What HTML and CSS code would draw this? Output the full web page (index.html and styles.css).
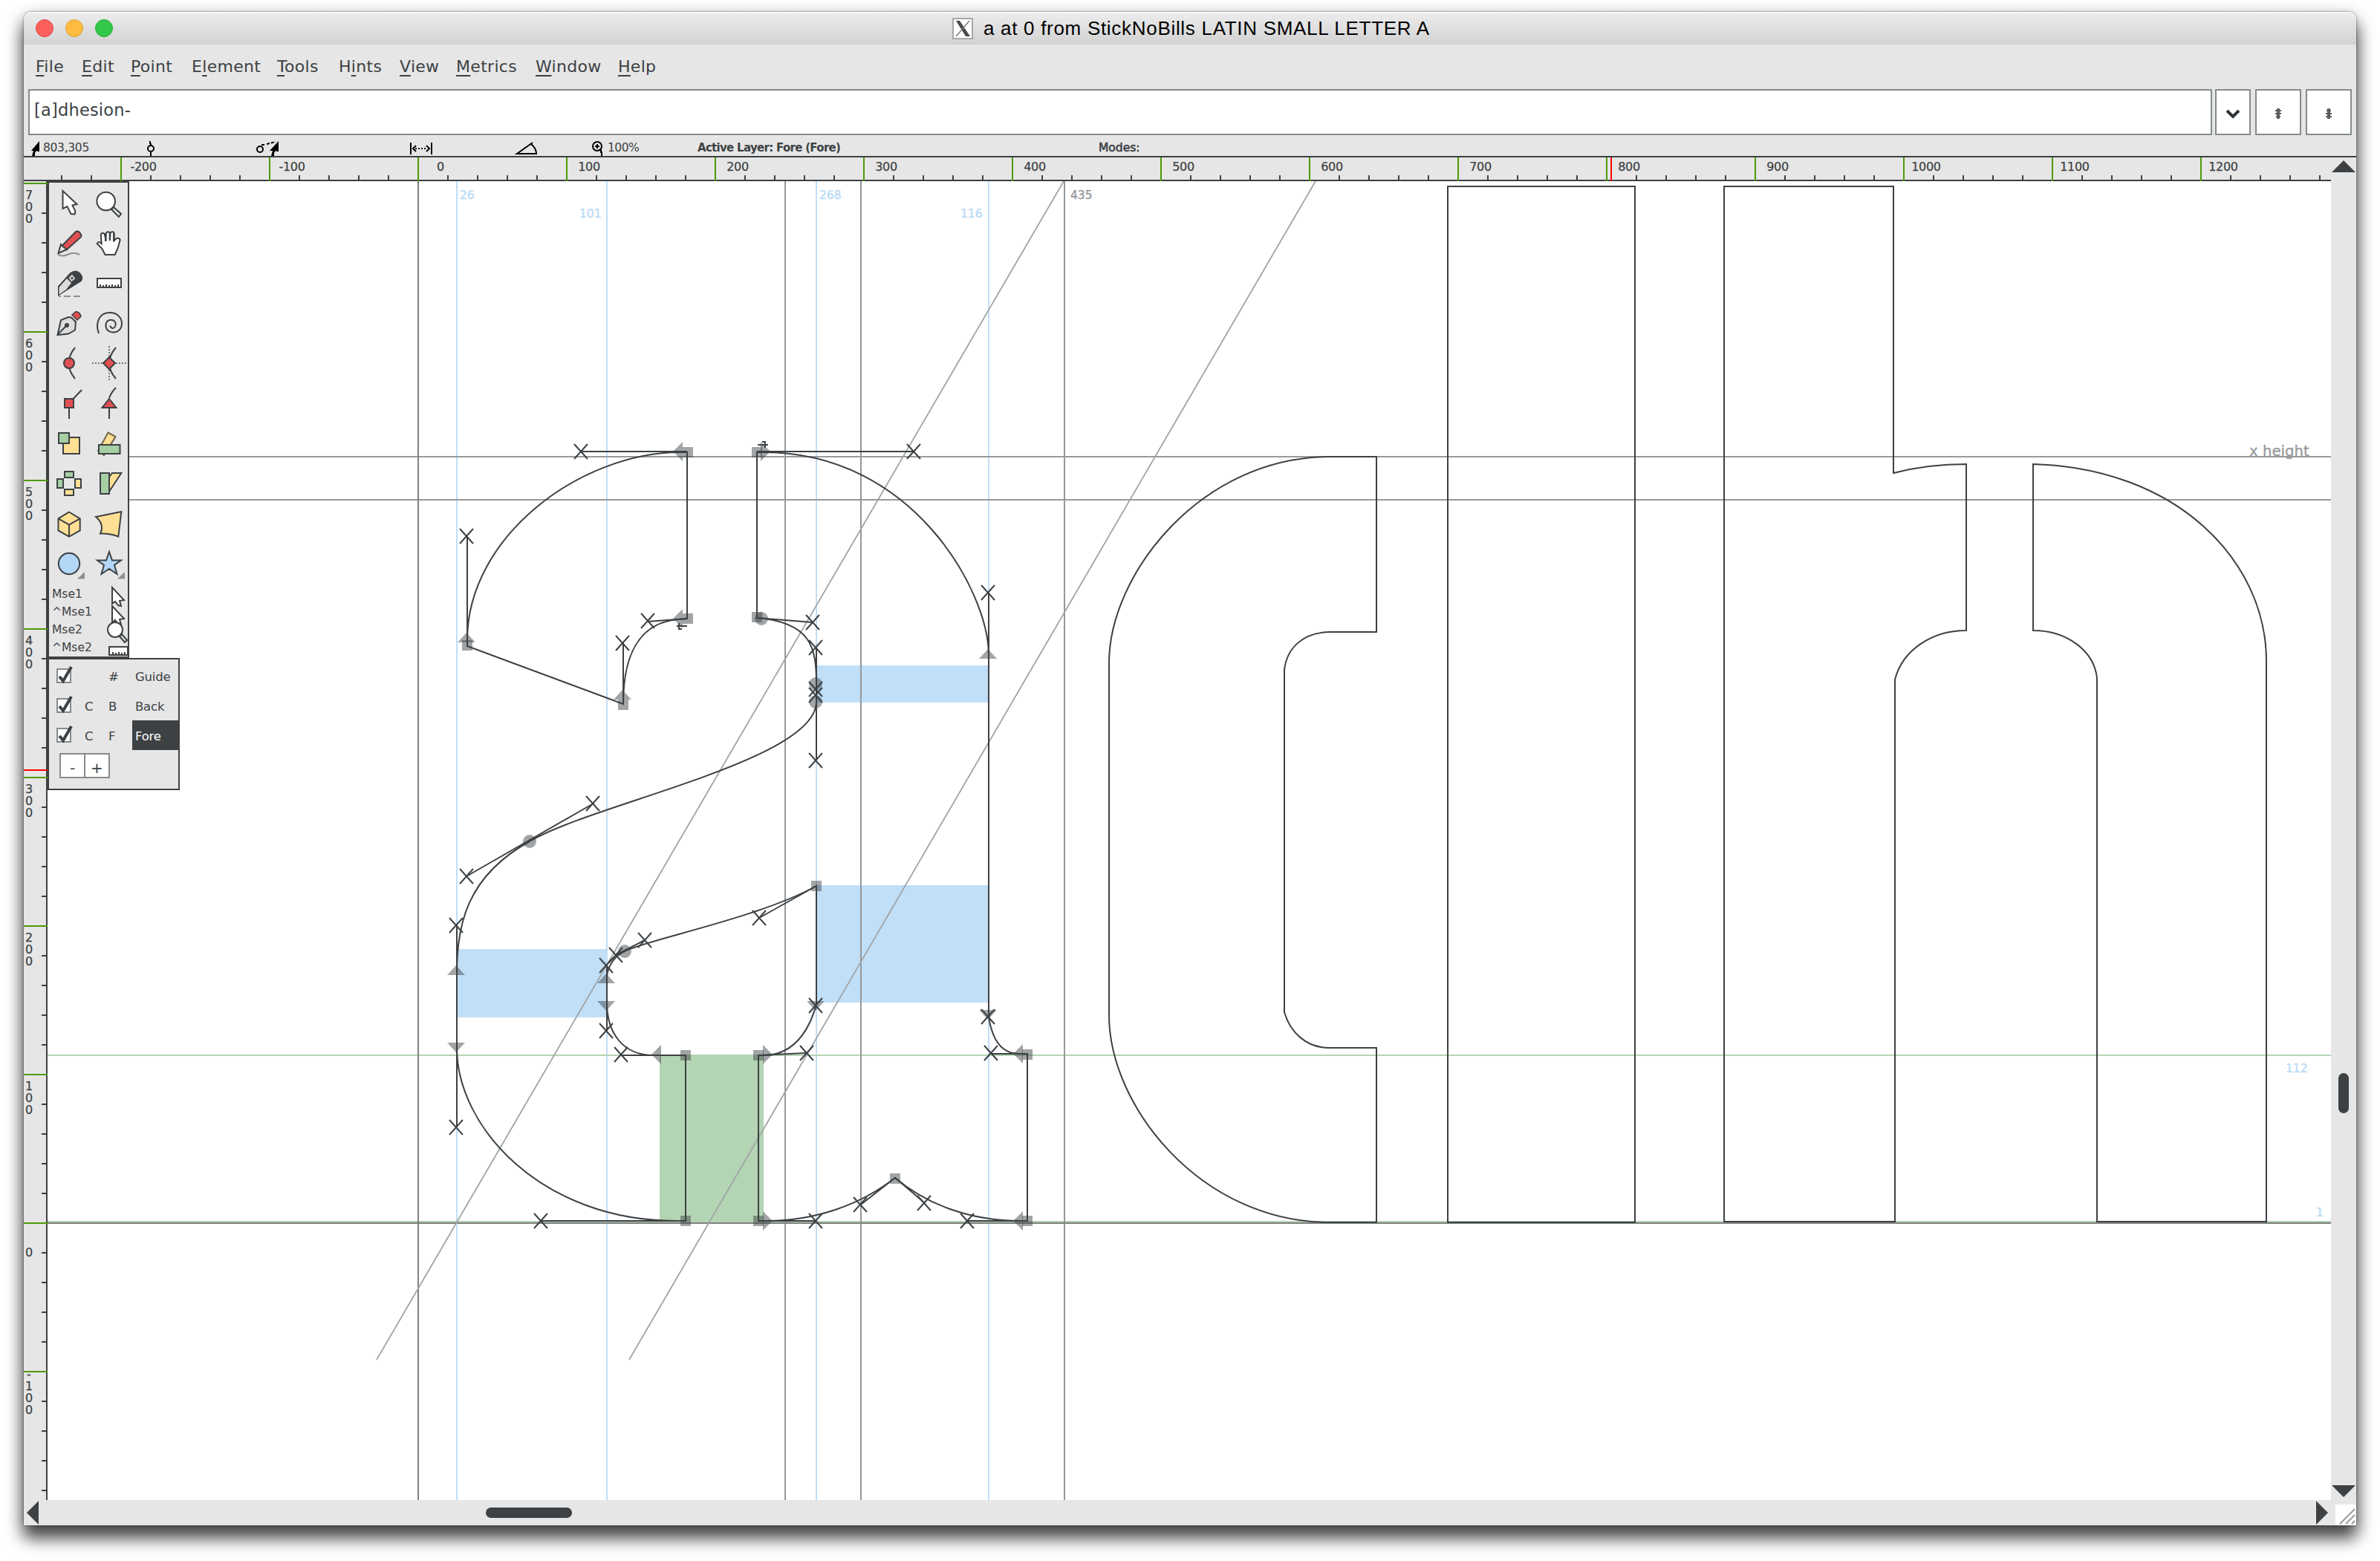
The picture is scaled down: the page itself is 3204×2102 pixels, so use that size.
FILE: index.html
```html
<!DOCTYPE html>
<html lang="en">
<head>
<meta charset="utf-8">
<title>a at 0 from StickNoBills LATIN SMALL LETTER A</title>
<link rel="stylesheet" href="styles.css">
</head>
<body>
<div class="window">
  <header class="titlebar">
    <div class="lights"><span class="light close"></span><span class="light minimise"></span><span class="light zoom"></span></div>
    <div class="title">
      <svg class="x11" width="28" height="30" viewBox="0 0 28 30"><rect x="1" y="2" width="26" height="27" fill="#fff" stroke="#a8a8a8" stroke-width="2"/><path d="M5 5h5l14 21h-6z" fill="#4a4a4a"/><path d="M23 5 5 26" stroke="#777" stroke-width="1.4"/></svg>
      <span class="title-text">a at 0 from StickNoBills LATIN SMALL LETTER A</span>
    </div>
  </header>

  <nav class="menubar">
    <span><u>F</u>ile</span><span><u>E</u>dit</span><span><u>P</u>oint</span><span>E<u>l</u>ement</span><span><u>T</u>ools</span><span>H<u>i</u>nts</span><span><u>V</u>iew</span><span><u>M</u>etrics</span><span><u>W</u>indow</span><span><u>H</u>elp</span>
  </nav>

  <div class="wordbar">
    <div class="entry"><span>[a]dhesion-</span></div>
    <div class="btn drop"><svg width="20" height="14" viewBox="0 0 20 14"><path d="M2 3 10 11 18 3" fill="none" stroke="#2c3438" stroke-width="4"/></svg></div>
    <div class="btn"><svg width="8" height="14" viewBox="0 0 8 14"><path d="M2 0h4v2h2v2H6v2h2v2H6v2h1v2H6v2H2v-2H1v-2h1V8H0V6h2V4H0V2h2z" fill="#5b5f62"/></svg></div>
    <div class="btn"><svg width="8" height="14" viewBox="0 0 8 14"><path d="M2 0h4v2h1v2H6v2h2v2H6v2h2v2H6v2H2v-2H0v-2h2V8H0V6h2V4H1V2h1z" fill="#5b5f62"/></svg></div>
  </div>

  <div class="status">
    <div class="field coords"><svg width="16" height="20" viewBox="0 0 16 20"><path d="M11 0v14H9L7 13l-2 3v4H1l2-7H0z" fill="#000"/></svg><span>803,305</span></div>
    <div class="field"><svg width="18" height="20" viewBox="0 0 18 20"><path d="M7 0v4M8 3v3M8 15v5" stroke="#000" stroke-width="2"/><circle cx="8" cy="10" r="4" fill="none" stroke="#000" stroke-width="2"/></svg></div>
    <div class="field"><svg width="34" height="20" viewBox="0 0 34 20"><circle cx="7" cy="11" r="4" fill="none" stroke="#000" stroke-width="2"/><path d="M9 5h6M16 4 28 1" stroke="#000" stroke-width="2" stroke-dasharray="4 2"/><path d="M32 0v14h-2l-2-1-2 3v4h-4l2-7h-4z" fill="#000"/></svg></div>
    <div class="field"><svg width="34" height="20" viewBox="0 0 34 20"><path d="M3 2v16M31 2v16M10 6 6 10l4 4M24 6l4 4-4 4" fill="none" stroke="#000" stroke-width="2"/><path d="M9 10h16" stroke="#000" stroke-width="2" stroke-dasharray="2 2"/></svg></div>
    <div class="field"><svg width="34" height="20" viewBox="0 0 34 20"><path d="M25 2 4 17h26c0-4-1-8-7-13" fill="none" stroke="#000" stroke-width="2"/></svg></div>
    <div class="field zoomlevel"><svg width="18" height="20" viewBox="0 0 18 20"><circle cx="9" cy="7" r="6" fill="none" stroke="#000" stroke-width="2"/><path d="M6 7h6M9 4v6M11 12h3v3h1v5" fill="none" stroke="#000" stroke-width="2"/></svg><span>100%</span></div>
    <div class="field strong">Active Layer: Fore (Fore)</div>
    <div class="field modes">Modes:</div>
  </div>

  <div class="workspace">
    <div class="main">
      <div class="hruler">
        <div class="hcell lead"></div>
        <div class="hcell"><b>-200</b></div><div class="hcell"><b>-100</b></div><div class="hcell"><b>0</b></div><div class="hcell"><b>100</b></div><div class="hcell"><b>200</b></div><div class="hcell"><b>300</b></div><div class="hcell"><b>400</b></div><div class="hcell"><b>500</b></div><div class="hcell"><b>600</b></div><div class="hcell"><b>700</b></div><div class="hcell"><b>800</b></div><div class="hcell"><b>900</b></div><div class="hcell"><b>1000</b></div><div class="hcell"><b>1100</b></div><div class="hcell"><b>1200</b></div>
        <i class="cursor-x"></i>
      </div>
      <div class="row">
        <div class="vruler">
          <div class="vcell"><b>7<br>0<br>0</b></div><div class="vcell"><b>6<br>0<br>0</b></div><div class="vcell"><b>5<br>0<br>0</b></div><div class="vcell"><b>4<br>0<br>0</b></div><div class="vcell"><b>3<br>0<br>0</b></div><div class="vcell"><b>2<br>0<br>0</b></div><div class="vcell"><b>1<br>0<br>0</b></div><div class="vcell zero"><b>0</b></div><div class="vcell neg"><b>-<br>1<br>0<br>0</b></div>
          <i class="cursor-y"></i>
        </div>
        <div class="canvas">
          <svg class="drawing" width="3074" height="1776" viewBox="64 244 3074 1776">
            <defs>
              <path id="x" d="M-9-10 9 10M9-10-9 10" class="ctl"/>
              <rect id="sq" x="-7" y="-7" width="14" height="14" class="mk"/>
              <circle id="ci" r="9" class="mk"/>
              <path id="up" d="M-12 6 0-7 12 6z" class="mk"/>
              <path id="dn" d="M-12-6 0 7 12-6z" class="mk"/>
              <path id="lt" d="M6-13V13L-7 0z" class="mk"/>
              <path id="rt" d="M-6-13V13L7 0z" class="mk"/>
            </defs>
            <!-- hint zones -->
            <g fill="#c1dff7"><rect x="1100" y="896" width="230" height="50"/><rect x="1100" y="1192" width="230" height="158"/><rect x="616" y="1278" width="201" height="92"/></g>
            <rect x="888" y="1421" width="140" height="225" fill="#b4d5b3"/>
            <!-- guides -->
            <g class="blue"><path d="M615 244V2020M817 244V2020M1099 244V2020M1331 244V2020"/></g>
            <g class="green"><path d="M64 1421H3138M64 1645H3138"/></g>
            <g class="metric"><path d="M172 615H3138M172 673H3138M1057 244V2020M1159 244V2020M1433 244V2020"/></g>
            <g class="axis"><path d="M563 244V2020M64 1647H3138"/></g>
            <path d="M1432 244 507 1831M1771 244 847 1831" class="slant"/>
            <!-- neighbouring glyphs -->
            <g class="outline">
              <path d="M1853 615V851H1791C1752 851 1732 875 1729 902V1363C1737 1390 1758 1411 1790 1411H1853V1646H1790C1617 1646 1493 1490 1493 1367V893C1493 773 1617 615 1790 615Z"/>
              <path d="M1949 251H2201V1646H1949Z"/>
              <path d="M2321 251H2549V637Q2595 625 2647 625V849C2600 849 2561 876 2551 915V1645H2321Z"/>
              <path d="M2737 625C2930 630 3051 755 3051 890V1645H2823V913C2819 876 2782 849 2737 849Z"/>
            </g>
            <!-- active glyph -->
            <g class="outline">
              <path d="M925 609V833L914 834C872 837 839 866 839 948L629 870V862C629 722 782 609 916 609Z"/>
              <path d="M1019 609H1028C1230 609 1331 798 1331 882V1362C1331 1369 1334 1419 1372 1419H1383V1644H1375C1303 1644 1245 1620 1205 1586C1159 1622 1098 1644 1032 1644H1021V1421H1032C1085 1418 1099 1354 1099 1350V1193C1022 1236 868 1266 841 1281C829 1286 816 1301 817 1320V1350C817 1388 836 1421 880 1421H923V1644H911C728 1644 615 1517 615 1411V1310C615 1246 628 1180 713 1133C798 1082 1099 1024 1099 945V920C1099 872 1092 838 1019 832Z"/>
            </g>
            <!-- control handles -->
            <path class="handle" d="M782 608H925M629 722V862M839 866V948M872 837 925 833M1019 608H1230M1331 798V882M1019 832 1093 838M1099 872V1023M628 1180 797 1083M615 1246V1517M728 1644H923M836 1421H923M817 1300V1388M829 1286 868 1266M1099 1193 1022 1236M1021 1421 1085 1418M1099 1354V1300M1021 1644H1098M1159 1622 1205 1586 1245 1620M1303 1644H1383M1331 1369V1300M1334 1419H1383"/>
            <use href="#x" x="782" y="608"/><use href="#x" x="628" y="722"/><use href="#x" x="838" y="866"/><use href="#x" x="872" y="836"/><use href="#x" x="1230" y="608"/><use href="#x" x="1330" y="798"/><use href="#x" x="1094" y="838"/><use href="#x" x="1098" y="872"/><use href="#x" x="1098" y="928"/><use href="#x" x="1098" y="936"/><use href="#x" x="1098" y="1024"/><use href="#x" x="798" y="1082"/><use href="#x" x="628" y="1180"/><use href="#x" x="614" y="1246"/><use href="#x" x="614" y="1518"/><use href="#x" x="728" y="1644"/><use href="#x" x="836" y="1420"/><use href="#x" x="816" y="1388"/><use href="#x" x="816" y="1300"/><use href="#x" x="829" y="1286"/><use href="#x" x="868" y="1266"/><use href="#x" x="1022" y="1236"/><use href="#x" x="1098" y="1354"/><use href="#x" x="1086" y="1418"/><use href="#x" x="1098" y="1644"/><use href="#x" x="1158" y="1622"/><use href="#x" x="1244" y="1620"/><use href="#x" x="1302" y="1644"/><use href="#x" x="1330" y="1369"/><use href="#x" x="1334" y="1418"/>
            <!-- on-curve points -->
            <use href="#sq" x="926" y="609"/><use href="#lt" x="913" y="608"/><use href="#sq" x="926" y="833"/><use href="#lt" x="913" y="833"/><use href="#up" x="628" y="859"/><use href="#sq" x="629" y="869"/><use href="#up" x="838" y="936"/><use href="#sq" x="839" y="949"/>
            <use href="#sq" x="1019" y="609"/><use href="#rt" x="1030" y="608"/><use href="#sq" x="1019" y="831"/><use href="#ci" x="1025" y="833"/><use href="#up" x="1330" y="881"/><use href="#ci" x="1098" y="921"/><use href="#ci" x="1098" y="945"/><use href="#ci" x="713" y="1133"/><use href="#up" x="614" y="1307"/><use href="#dn" x="614" y="1410"/><use href="#sq" x="923" y="1644"/><use href="#sq" x="923" y="1421"/><use href="#lt" x="884" y="1420"/><use href="#dn" x="816" y="1354"/><use href="#up" x="816" y="1318"/><use href="#ci" x="841" y="1281"/><use href="#sq" x="1099" y="1193"/><use href="#dn" x="1098" y="1354"/><use href="#rt" x="1033" y="1420"/><use href="#sq" x="1021" y="1421"/><use href="#sq" x="1021" y="1644"/><use href="#rt" x="1033" y="1644"/><use href="#sq" x="1205" y="1587"/><use href="#sq" x="1383" y="1644"/><use href="#lt" x="1371" y="1644"/><use href="#sq" x="1383" y="1420"/><use href="#lt" x="1371" y="1419"/><use href="#dn" x="1330" y="1366"/>
            <path class="dir" d="M1020 599h14M1026 595h4v8M911 843h14M918 847h-4v-8"/>
            <g class="lbl"><text x="619" y="268">26</text><text x="780" y="293">101</text><text x="1103" y="268">268</text><text x="1293" y="293">116</text><text x="3077" y="1444">112</text><text x="3118" y="1638">1</text></g>
            <text class="lbl grey" x="1441" y="268">435</text>
            <text class="xh" x="3028" y="614">x height</text>
          </svg>

          <div class="tools">
            <div class="toolgrid">
              <svg class="ic" viewBox="0 0 54 54"><path d="M18.5 11v24l6-3 5 10 5 .5 1-4-4-8 6-1.500z" fill="#fff"/></svg>
              <svg class="ic" viewBox="0 0 54 54"><circle cx="22.700" cy="25" r="12.300" fill="#fff"/><path d="M30 36l3-3 10 9-3 4z" fill="#e2e2e2"/></svg>
              <svg class="ic" viewBox="0 0 54 54"><path d="M12.500 41l3.500-12 8 7z" fill="#e6e6e6"/><path d="M17.500 31 36 12q3-2 6 2t0 6L24 36z" fill="#e15053"/><path d="M12 43q7 3 14-.5t15 .5" fill="none" stroke="#8b9194"/></svg>
              <svg class="ic" viewBox="0 0 54 54"><path d="M10.700 28q2-4 6 0l-1-12q2-4 5-1l2 9V14q2-3 5-1v11l1-11q4-2 5 1v10l3-3q4-1 5 2l-3 11-4 9H21.500l-4-8z" fill="#fff"/><path d="M22 14v11M28 13v11M33 14v11" fill="none"/></svg>
              <svg class="ic" viewBox="0 0 54 54"><path d="M13 43V32L29 14q7-5 12 0t2 10L24 36z" fill="#3d4144"/><path d="M13.500 42.500V33l10.500-12 6 6-7 9z" fill="#dcdcdc" stroke="none"/><path d="M26 20l5-5 5 6-6 5z" fill="#ccc" stroke-width="1"/><circle cx="31" cy="20.500" r="1.500" fill="#3d4144" stroke="none"/><path d="M13 45h3M20 45h9M33 45h9" stroke="#8b9194"/></svg>
              <svg class="ic" viewBox="0 0 54 54"><rect x="11" y="21" width="32" height="12" fill="#fff"/><path d="M15 32v-3M19 32v-2M23 32v-3M27 32v-2M31 32v-3M35 32v-2M39 32v-3"/></svg>
              <svg class="ic" viewBox="0 0 54 54"><path d="M11.500 43 16 23l10-4 4 .5 6 6-1 11-9 5z" fill="#dcdcdc"/><path d="M31 16l5-4.500q6 1 7 6.500l-5 5z" fill="#e15053" stroke-width="1.500"/><path d="M12 42 23 31"/><circle cx="24" cy="30" r="2" fill="#3d4144"/></svg>
              <svg class="ic" viewBox="0 0 54 54"><path d="M13 41C8 27 13 13 28 13c11 0 16 8 16 15 0 8-7 12-12 11.500-7-.5-10-5-9.500-10.500S28 22 31.500 23c5 1.500 5 7 3 9.500s-6 1.500-6-2" fill="none"/></svg>
              <svg class="ic" viewBox="0 0 54 54"><path d="M35 6Q18 27 35 48" fill="none"/><circle cx="27" cy="27" r="7" fill="#e15053"/></svg>
              <svg class="ic" viewBox="0 0 54 54"><path d="M4 27h46M27 4v46" stroke-dasharray="2 2" stroke="#777"/><path d="M36 6Q18 27 36 48" fill="none"/><path d="M27 19 35 27 27 35 19 27z" fill="#e15053"/></svg>
              <svg class="ic" viewBox="0 0 54 54"><path d="M27 27 44 9M27 27v21"/><rect x="21" y="21" width="12" height="12" fill="#e15053"/></svg>
              <svg class="ic" viewBox="0 0 54 54"><path d="M27 20Q30 12 36 6M27 30v18" fill="none"/><path d="M27 21 36.500 33h-19z" fill="#e15053"/></svg>
              <svg class="ic" viewBox="0 0 54 54"><rect x="19" y="19" width="22" height="22" fill="#ffdf94"/><rect x="13" y="13" width="14" height="14" fill="#a6cfa4"/></svg>
              <svg class="ic" viewBox="0 0 54 54"><path d="M25.500 12.500 35.500 18 20 43l-8-6z" fill="#ffdf94" stroke="#6d6548"/><rect x="13" y="29" width="28.500" height="12" fill="#a6cfa4"/></svg>
              <svg class="ic" viewBox="0 0 54 54"><g fill="#a6cfa4"><rect x="21" y="11" width="12" height="8"/><rect x="11" y="21" width="8" height="12"/></g><g fill="#ffdf94"><rect x="35" y="21" width="8" height="12"/><rect x="21" y="35" width="12" height="8"/></g></svg>
              <svg class="ic" viewBox="0 0 54 54"><path d="M25 21 31 13H43.300L27 38z" fill="#ffdf94"/><rect x="15" y="13" width="12" height="28" fill="#a6cfa4"/></svg>
              <svg class="ic" viewBox="0 0 54 54"><path d="M27 11.500 41.700 20.300v16L27 44.500 12.500 36.300v-16z" fill="#ffdf94"/><path d="M12.500 20.300 27 28.700l14.700-8.400M27 28.700v16" fill="none"/></svg>
              <svg class="ic" viewBox="0 0 54 54"><path d="M9 18 43.300 11l-4 33.500Q28 40 15 40.500 21 28 9 18z" fill="#ffdf94"/></svg>
              <svg class="ic" viewBox="0 0 54 54"><circle cx="27" cy="27" r="14.200" fill="#b3d7f7"/><path d="M48 38v9.500h-10z" fill="#8b9194" stroke="none"/></svg>
              <svg class="ic" viewBox="0 0 54 54"><path d="M27 11l4 11.500h12l-9 6.500 3.500 12L27 34l-10.500 7L20 29l-9-6.500h12z" fill="#b3d7f7"/><path d="M48 38v9.500h-10z" fill="#8b9194" stroke="none"/></svg>
            </div>
            <div class="mouse"><span>Mse1</span><svg class="mi" viewBox="0 0 30 24"><path d="M8 5v22l4-3 4 5 4 1-2-7 6-1z" fill="#fff"/></svg></div>
            <div class="mouse"><span>^Mse1</span><svg class="mi" viewBox="0 0 30 24"><path d="M8 6v22l4-3 4 5 4 1-2-7 6-1z" fill="#fff"/></svg></div>
            <div class="mouse"><span>Mse2</span><svg class="mi" viewBox="0 0 30 24"><circle cx="12" cy="14" r="10" fill="#fff"/><path d="M18 23l3-3 7 8-3 3z" fill="#e2e2e2"/></svg></div>
            <div class="mouse"><span>^Mse2</span><svg class="mi" viewBox="0 0 30 24"><rect x="4" y="13" width="25" height="11" fill="#fff"/><path d="M9 23v-3M13 23v-2M17 23v-3M21 23v-2M25 23v-3"/></svg></div>
          </div>

          <div class="layers">
            <div class="layer"><span class="check"><svg viewBox="0 0 24 24"><path d="M5 13l5 6L21 0" /></svg></span><span></span><span class="hash">#</span><span class="name">Guide</span></div>
            <div class="layer"><span class="check"><svg viewBox="0 0 24 24"><path d="M5 13l5 6L21 0" /></svg></span><span>C</span><span>B</span><span class="name">Back</span></div>
            <div class="layer"><span class="check"><svg viewBox="0 0 24 24"><path d="M5 13l5 6L21 0" /></svg></span><span>C</span><span>F</span><span class="name on">Fore</span></div>
            <div class="addrow"><span>-</span><span>+</span></div>
          </div>
        </div>
      </div>
      <div class="hscroll">
        <svg width="16" height="32" viewBox="0 0 16 32"><path d="M16 0v32L0 16z" fill="#3d4144"/></svg>
        <span class="hthumb"></span>
        <svg width="16" height="32" viewBox="0 0 16 32"><path d="M0 0v32l16-16z" fill="#3d4144"/></svg>
      </div>
    </div>
    <div class="vscroll">
      <svg width="32" height="16" viewBox="0 0 32 16"><path d="M0 16h32L16 0z" fill="#3d4144"/></svg>
      <span class="vthumb"></span>
      <svg width="32" height="16" viewBox="0 0 32 16"><path d="M0 0h32L16 16z" fill="#3d4144"/></svg>
      <svg class="grip" width="28" height="28" viewBox="0 0 28 28"><path d="M6 26 26 6M14 26 26 14M22 26l4-4" stroke="#9a9a9a" stroke-width="2"/></svg>
    </div>
  </div>
</div>
</body>
</html>
```
FILE: styles.css
```css
* { box-sizing: border-box; }
body {
  margin: 0;
  padding: 16px 32px 48px;
  height: 2102px;
  overflow: hidden;
  background: #fff;
  color: #3d4144;
  font: 22px "DejaVu Sans", sans-serif;
}
svg { display: block; flex: none; }

.window {
  width: 3140px;
  height: 2038px;
  display: flex;
  flex-direction: column;
  background: #e6e6e6;
  border-radius: 10px 10px 0 0;
  box-shadow: 0 0 3px rgba(0,0,0,.5), 0 18px 22px rgba(0,0,0,.6), 0 8px 24px rgba(0,0,0,.4);
}

/* title bar */
.titlebar {
  height: 44px;
  flex: none;
  display: grid;
  grid-template-columns: 1250px auto 1fr;
  align-items: center;
  border-radius: 10px 10px 0 0;
  background: linear-gradient(#ededed, #d2d2d2);
  box-shadow: inset 0 2px 0 #f6f6f6;
}
.lights { display: flex; gap: 16px; padding: 0 0 0 16px; }
.light { width: 24px; height: 24px; border-radius: 50%; border: 1.500px solid; }
.close { background: #fc605c; border-color: #df4744; }
.minimise { background: #fdbc40; border-color: #de9f34; }
.zoom { background: #34c84a; border-color: #27aa35; }
.title { display: flex; align-items: center; gap: 14px; color: #000; font: 26px "Liberation Sans", sans-serif; letter-spacing: .7px; white-space: nowrap; }

.menubar {
  height: 60px;
  flex: none;
  display: grid;
  grid-template-columns: 62px 66px 82px 115px 83px 82px 76px 107px 111px auto;
  padding: 16px 0 0 16px;
  line-height: 28px;
  letter-spacing: .3px;
}
.menubar u { text-decoration-thickness: 2px; text-underline-offset: 4px; }

.wordbar { height: 62px; flex: none; display: flex; padding: 0 6px; }
.entry, .btn { background: #fff; border: 2px solid #858b8e; }
.entry { width: 2940px; margin-right: 4px; padding: 12px 0 0 6px; line-height: 28px; font-size: 22.500px; letter-spacing: .2px; }
.btn { width: 62px; margin-left: 6px; display: flex; align-items: center; justify-content: center; padding-top: 3px; }
.btn.drop { width: 48px; margin: 0; }

.status {
  height: 30px;
  flex: none;
  display: grid;
  grid-template-columns: 153px 148px 207px 142px 103px 144px 540px 1fr;
  padding-left: 10px;
  border-bottom: 2px solid #3d4144;
  font-size: 15.500px;
}
.field { display: flex; align-items: flex-start; padding-top: 8px; line-height: 18px; white-space: nowrap; }
.coords { letter-spacing: -.3px; }
.zoomlevel span { margin-left: 5px; letter-spacing: -.5px; }
.strong { font-size: 15px; font-weight: 700; letter-spacing: -.7px; }
.modes { font-size: 15.500px; -webkit-text-stroke: .6px #3d4144; }

/* rulers */
.workspace { flex: 1; display: flex; min-height: 0; }
.main { width: 3106px; display: flex; flex-direction: column; }
.hruler {
  position: relative;
  height: 32px;
  flex: none;
  display: flex;
  overflow: hidden;
  background: linear-gradient(#3d4144, #3d4144) bottom / 100% 2px no-repeat;
}
.hcell {
  width: 200px;
  flex: none;
  border-left: 2px solid #4e9a06;
  background: repeating-linear-gradient(90deg, transparent 0 38px, #3d4144 38px 40px) left bottom / 190px 8px no-repeat;
}
.hcell.lead { width: 130px; border: 0; background: repeating-linear-gradient(90deg, #3d4144 0 2px, transparent 2px 40px) 50px bottom / 70px 8px no-repeat; }
.hcell b, .vcell b { display: block; font-weight: 400; font-size: 16px; -webkit-text-stroke: .25px #3d4144; }
.hcell b { width: 58px; text-align: center; line-height: 26px; letter-spacing: -.3px; }
.cursor-x { position: absolute; left: 2136px; top: 0; width: 2px; height: 32px; background: #f00; }

.row { height: 1776px; flex: none; display: flex; }
.vruler {
  position: relative;
  width: 32px;
  height: 1776px;
  padding-top: 2px;
  overflow: hidden;
  background: linear-gradient(#3d4144, #3d4144) right / 2px 100% no-repeat;
}
.vcell {
  height: 200px;
  border-top: 2px solid #4e9a06;
  background: repeating-linear-gradient(180deg, transparent 0 38px, #3d4144 38px 40px) right top / 8px 190px no-repeat;
}
.vcell b { width: 14px; padding-top: 7px; line-height: 16px; text-align: center; }
.vcell.zero b { padding-top: 31px; }
.vcell.neg b { padding-top: 0; margin-top: -5px; }
.cursor-y { position: absolute; left: 0; top: 792px; width: 32px; height: 2px; background: #f00; }

/* drawing area */
.canvas { position: relative; width: 3074px; background: #fff; }
.drawing path { stroke-width: 2; }
.outline, .handle, .ctl, .dir { fill: none; stroke: #3d4144; }
.drawing .mk { fill: #3d4144; fill-opacity: .48; stroke: none; }
.blue { stroke: #c1dff7; }
.green { stroke: #b4d5b3; }
.metric { stroke: #95999c; }
.axis { stroke: #808080; }
.drawing .slant { fill: none; stroke: #a0a4a6; stroke-width: 1.800; }
.lbl { font: 15.500px "DejaVu Sans", sans-serif; fill: #bcdcf6; stroke: #bcdcf6; stroke-width: .5; }
.lbl.grey { fill: #95999c; stroke: #95999c; stroke-width: .4; }
.xh { font: 19.700px "DejaVu Sans", sans-serif; fill: #95999c; stroke: #95999c; stroke-width: .3; }

/* floating palettes */
.tools, .layers { position: absolute; left: 0; background: #e6e6e6; border: 2px solid #3d4144; }
.tools { top: 0; width: 110px; height: 642px; overflow: hidden; }
.toolgrid { display: grid; grid-template-columns: 54px 54px; grid-auto-rows: 54px; margin-right: -2px; }
.ic { width: 54px; height: 54px; stroke: #3d4144; stroke-width: 2; fill: none; }
.mouse { display: flex; justify-content: space-between; height: 24px; padding-left: 4px; font-size: 15.500px; line-height: 28px; }
.mi { width: 30px; height: 24px; overflow: visible; stroke: #3d4144; stroke-width: 2; fill: none; margin-right: -1px; }
.layers { top: 642px; width: 178px; height: 178px; padding-top: 2px; font-size: 16.500px; }
.layer { display: grid; grid-template-columns: 48px 32px 32px 62px; grid-template-rows: 40px; line-height: 43px; }
.check { width: 20px; height: 20px; margin: 10px 0 0 10px; border: 2px solid #858b8e; background: #fff; }
.check svg { width: 24px; height: 24px; margin: -4px 0 0 -3px; overflow: visible; fill: none; stroke: #3d4144; stroke-width: 4; }
.name { padding-left: 4px; letter-spacing: -.2px; }
.name.on { background: #3d4144; color: #fff; }
.addrow { display: flex; padding: 4px 0 0 14px; }
.addrow span { width: 35px; height: 34px; border: 2px solid #858b8e; background: #fff; text-align: center; line-height: 36px; font-size: 20px; }
.addrow span + span { margin-left: -2px; }

/* scrollbars */
.hscroll { height: 34px; display: flex; align-items: center; padding: 0 4px; }
.hthumb { width: 116px; height: 14px; margin: 0 2348px 0 602px; border-radius: 7px; background: #3d4144; }
.vscroll { width: 34px; display: flex; flex-direction: column; align-items: center; padding-top: 4px; }
.vthumb { width: 14px; height: 54px; margin: 1213px 0 501px; border-radius: 7px; background: #3d4144; }
.grip { margin: 10px 0 0 6px; background: #fff; }
```
